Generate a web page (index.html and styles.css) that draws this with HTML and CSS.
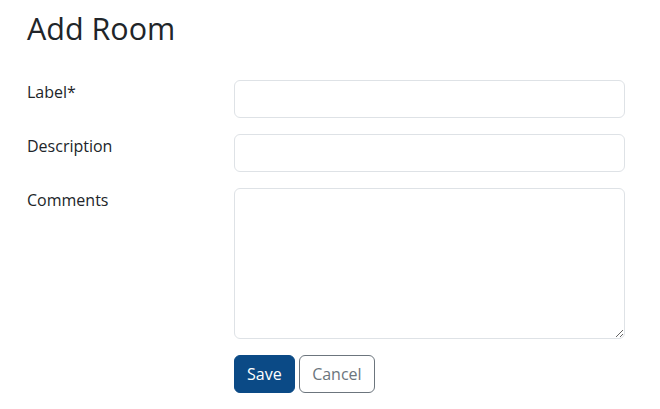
FILE: index.html
```html
<!DOCTYPE html>
<html lang="en">
<head>
    <meta charset="UTF-8">
    <meta name="viewport" content="width=device-width, initial-scale=1.0">
    <title>Add Room</title>
    <link rel="stylesheet" href="styles.css">
</head>
<body>
    <div class="page">
        <h1>Add Room</h1>
        <form class="room-form">
            <label for="label">Label*</label>
            <input type="text" id="label">

            <label for="description">Description</label>
            <input type="text" id="description">

            <label for="comments">Comments</label>
            <textarea id="comments"></textarea>

            <div class="actions">
                <button type="submit" class="btn btn-save">Save</button>
                <button type="button" class="btn btn-cancel">Cancel</button>
            </div>
        </form>
    </div>
</body>
</html>
```

FILE: styles.css
```css
/* Global Styles */
body {
    margin: 0;
    padding: 0;
    font-family: 'Open Sans', sans-serif;
    background: #fff;
    color: #212529;
}

.page {
    width: 598px;
    padding: 10px 0 0 27px;
}

h1 {
    margin: 0 0 33px;
    font-size: 30.5px;
    font-weight: 400;
    line-height: 37px;
}

.room-form {
    display: grid;
    grid-template-columns: 207px 391px;
    row-gap: 16px;
}

label {
    font-size: 16px;
    line-height: 24px;
}

input, textarea {
    box-sizing: border-box;
    width: 100%;
    height: 38px;
    margin: 0;
    padding: 6px 12px;
    font-family: inherit;
    font-size: 16px;
    border: 1px solid #dee2e6;
    border-radius: 6px;
    outline: none;
}

textarea {
    height: 151px;
    resize: vertical;
}

.actions {
    grid-column: 2;
    display: flex;
    gap: 4px;
}

.btn {
    height: 38px;
    padding: 0 12px;
    font-family: inherit;
    font-size: 16px;
    border-radius: 6px;
    cursor: pointer;
}

.btn-save {
    background: #0b4a86;
    border: 1px solid #0b4a86;
    color: #fff;
}

.btn-cancel {
    padding: 0 12.5px;
    background: #fff;
    border: 1px solid #6c757d;
    color: #6c757d;
}
```
